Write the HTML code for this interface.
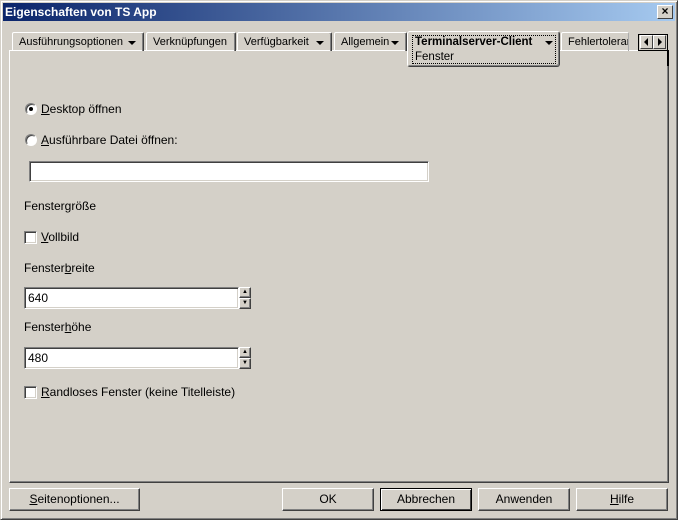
<!DOCTYPE html>
<html><head><meta charset="utf-8"><style>
*{margin:0;padding:0;box-sizing:border-box}
body{width:678px;height:520px;background:#d4d0c8;font-family:"Liberation Sans",Arial,sans-serif;font-size:12px;color:#000;position:relative;overflow:hidden}
.a{position:absolute}
.win{left:0;top:0;width:678px;height:520px;border:1px solid;border-color:#d4d0c8 #404040 #404040 #d4d0c8;box-shadow:inset 1px 1px 0 #fff,inset -1px -1px 0 #808080}
.title{left:3px;top:3px;width:672px;height:18px;background:linear-gradient(to right,#0a246a,#a6caf0);color:#fff;font-weight:bold;font-size:12px;line-height:18px;padding-left:2px}
.close{left:657px;top:5px;width:16px;height:14px;background:#d4d0c8;border:1px solid;border-color:#fff #404040 #404040 #fff;font-size:12px;line-height:11px;text-align:center;font-weight:bold;color:#000}
.tab{top:32px;height:19px;border-top:1px solid #fff;border-left:1px solid #fff;border-right:1px solid #404040;box-shadow:inset -1px 0 0 #808080;line-height:19px;padding-left:6px;white-space:nowrap;border-radius:2px 2px 0 0;font-size:11px}
.arr{position:absolute;right:7px;top:8px;width:0;height:0;border-left:4px solid transparent;border-right:4px solid transparent;border-top:4px solid #000}
.panel{left:9px;top:50px;width:660px;height:433px;border:1px solid;border-color:#fff #404040 #404040 #fff;box-shadow:inset -1px -1px 0 #808080}
.act{left:407px;top:31px;width:153px;height:36px;background:#d4d0c8;border:1px solid;border-color:#fff #404040 #404040 #fff;box-shadow:inset -1px -1px 0 #808080;border-radius:3px}
.focus{left:412px;top:35px;width:144px;height:29px;border:1px dotted #000}
.edit{background:#fff;border:1px solid;border-color:#808080 #fff #fff #808080;box-shadow:inset 1px 1px 0 #404040,inset -1px -1px 0 #d4d0c8;padding-left:3px;font-size:12px;line-height:20px}
.radio{width:12px;height:12px;border-radius:50%;background:#fff;border:1px solid;border-color:#808080 #fff #fff #808080;box-shadow:inset 1px 1px 0 #404040}
.chk{width:13px;height:13px;background:#fff;border:1px solid;border-color:#808080 #fff #fff #808080;box-shadow:inset 1px 1px 0 #404040,inset -1px -1px 0 #d4d0c8}
.btn{height:23px;top:488px;border:1px solid;border-color:#fff #404040 #404040 #fff;box-shadow:inset -1px -1px 0 #808080;text-align:center;line-height:21px;font-size:12px}
.spin{width:12px;height:11px;border:1px solid;border-color:#fff #404040 #404040 #fff;box-shadow:inset -1px -1px 0 #808080;font-size:6px;text-align:center;line-height:8px}
u{text-decoration:underline}
</style></head><body>
<div class="a win"></div>
<div class="a title">Eigenschaften von TS App</div>
<div class="a close">×</div>

<div class="a panel"></div>
<div class="a tab" style="left:12px;width:132px">Ausführungsoptionen<span class="arr"></span></div>
<div class="a tab" style="left:146px;width:90px">Verknüpfungen</div>
<div class="a tab" style="left:237px;width:95px">Verfügbarkeit<span class="arr"></span></div>
<div class="a tab" style="left:334px;width:73px">Allgemein<span class="arr"></span></div>
<div class="a act"></div>
<div class="a focus"></div>
<div class="a" style="left:415px;top:36px;font-weight:bold;font-size:11.5px;white-space:nowrap">Terminalserver-Client</div>
<div class="a arr" style="left:545px;top:41px;right:auto"></div>
<div class="a" style="left:415px;top:51px;font-size:11.5px">Fenster</div>
<div class="a tab" style="left:561px;width:68px;border-right:1px solid #aaa;box-shadow:none;overflow:hidden">Fehlertoleranz</div>
<div class="a" style="left:638px;top:34px;width:30px;height:17px;border:1px solid #000;background:#d4d0c8"></div>
<div class="a" style="left:640px;top:35px;width:13px;height:14px;border:1px solid;border-color:#fff #404040 #404040 #fff"></div>
<div class="a" style="left:653px;top:35px;width:13px;height:14px;border:1px solid;border-color:#fff #404040 #404040 #fff"></div>
<div class="a" style="left:644px;top:38px;width:0;height:0;border-top:4px solid transparent;border-bottom:4px solid transparent;border-right:4px solid #000"></div>
<div class="a" style="left:658px;top:38px;width:0;height:0;border-top:4px solid transparent;border-bottom:4px solid transparent;border-left:4px solid #000"></div>
<div class="a" style="left:667px;top:50px;width:2px;height:16px;background:#000"></div>

<div class="a radio" style="left:25px;top:103px"></div>
<div class="a" style="left:29px;top:107px;width:4px;height:4px;background:#000;border-radius:50%"></div>
<div class="a" style="left:41px;top:102px"><u>D</u>esktop öffnen</div>
<div class="a radio" style="left:25px;top:134px"></div>
<div class="a" style="left:41px;top:133px"><u>A</u>usführbare Datei öffnen:</div>
<div class="a edit" style="left:29px;top:161px;width:400px;height:21px"></div>
<div class="a" style="left:24px;top:199px">Fenstergröße</div>
<div class="a chk" style="left:24px;top:231px"></div>
<div class="a" style="left:41px;top:230px"><u>V</u>ollbild</div>
<div class="a" style="left:24px;top:261px">Fenster<u>b</u>reite</div>
<div class="a edit" style="left:24px;top:287px;width:215px;height:22px">640</div>
<div class="a spin" style="left:239px;top:287px">▲</div>
<div class="a spin" style="left:239px;top:298px">▼</div>
<div class="a" style="left:24px;top:320px">Fenster<u>h</u>öhe</div>
<div class="a edit" style="left:24px;top:347px;width:215px;height:22px">480</div>
<div class="a spin" style="left:239px;top:347px">▲</div>
<div class="a spin" style="left:239px;top:358px">▼</div>
<div class="a chk" style="left:24px;top:386px"></div>
<div class="a" style="left:41px;top:385px"><u>R</u>andloses Fenster (keine Titelleiste)</div>

<div class="a btn" style="left:9px;width:131px"><u>S</u>eitenoptionen...</div>
<div class="a btn" style="left:282px;width:92px">OK</div>
<div class="a btn" style="left:380px;width:92px;border-color:#000;box-shadow:inset 1px 1px 0 #fff,inset -1px -1px 0 #404040">Abbrechen</div>
<div class="a btn" style="left:478px;width:92px">Anwenden</div>
<div class="a btn" style="left:576px;width:92px"><u>H</u>ilfe</div>
</body></html>
